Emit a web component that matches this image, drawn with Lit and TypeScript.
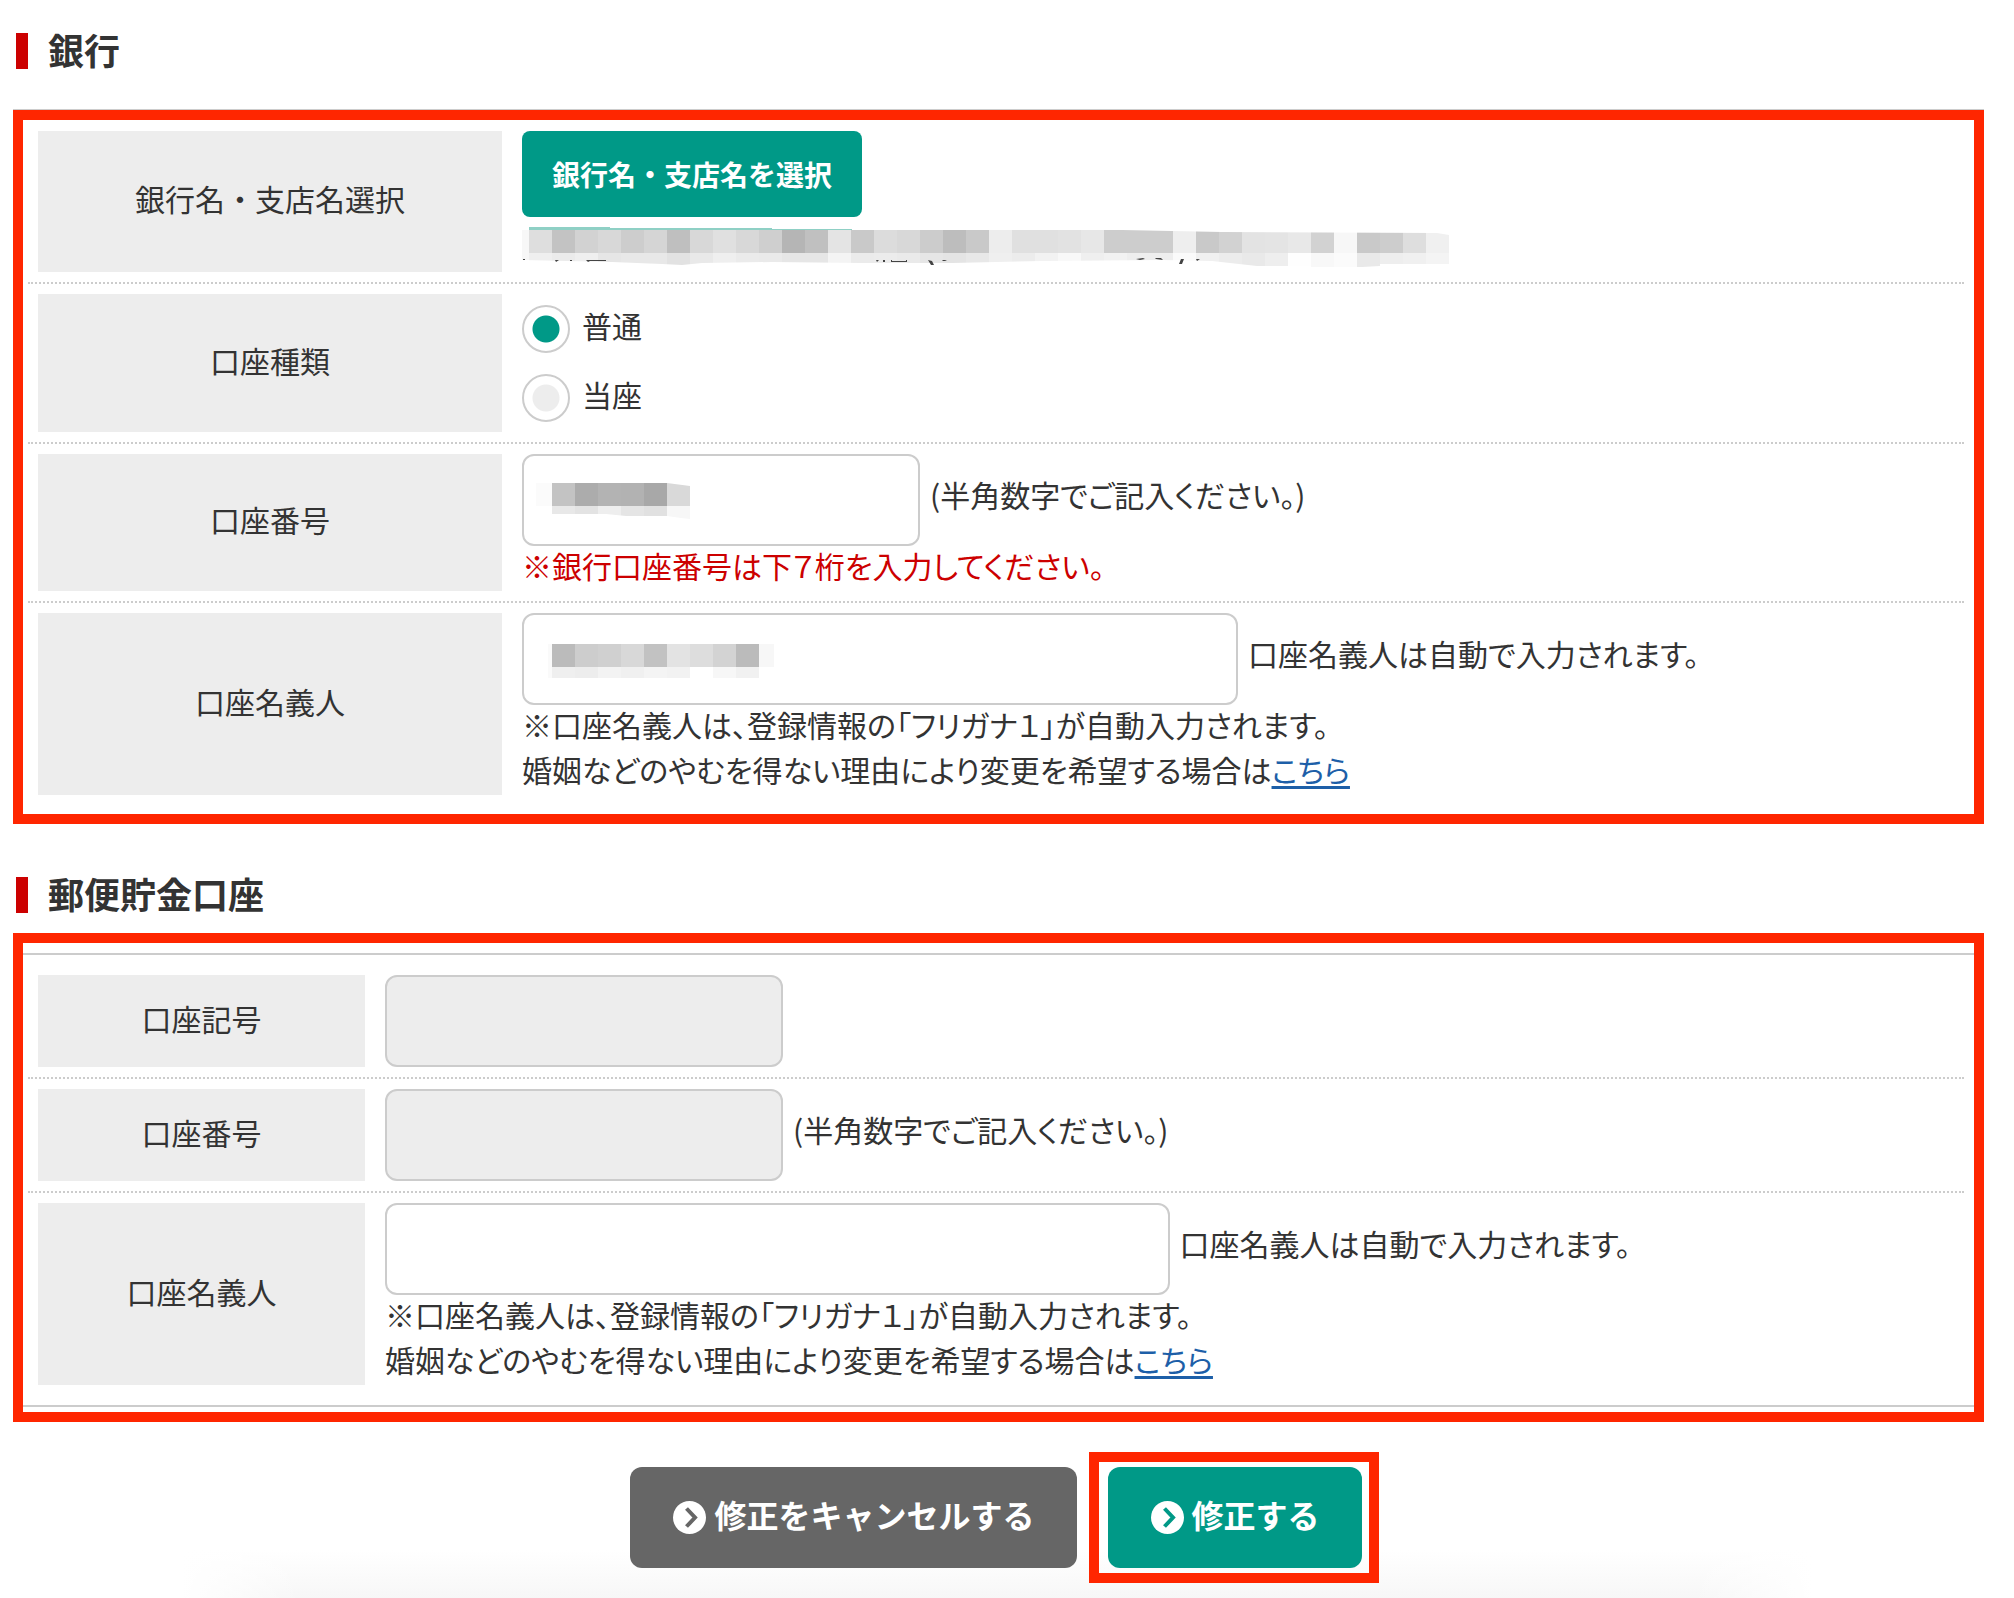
import { LitElement, html, css, svg } from "lit";
import { customElement, property, state } from "lit/decorators.js";

type Tile = [x: number, y: number, width: number, height: number, fill: string];

/** Lays out one strip of mosaic tiles from a list of two-digit grey levels. */
const strip = (x: number, y: number, size: number, height: number, greys: string): Tile[] =>
  greys.split(" ").map((g, i): Tile => [x + i * size, y, size, height, `#${g}${g}${g}`]);

interface Mosaic {
  width: number;
  height: number;
  tiles: Tile[];
  outline: string;
  accent?: string;
  marks?: string;
}

const BRANCH: Mosaic = {
  width: 928,
  height: 45,
  outline:
    "M0 3 H600 L700 5 L915 6 L927 8 V37 H858 V39 L840 40 H789 V39 H735 L690 34 L640 33 L520 34 L430 36 H340 L250 35 L180 36 L160 38 L140 37 L90 35 L0 33 Z",
  tiles: [
    [0, 3, 7, 30, "#f7f7f7"],
    ...strip(7, 3, 23, 23, "de c3 d2 d8 cd d5 bf d8 e0 d8 cf b5 c0 e4 c9 dc d8 cc bd c9 ed e0 e0 e2 e7 cd cd cd ee c9 d2 e3 e4 e8 d2 f7 c9 cd de f0"),
    ...strip(7, 26, 23, 14, "ef eb ef e6 e8 e8 e2 e9 ef eb ea e6 e6 f4 eb ec ea e6 e4 e8 ef ec f2 f8 ef f2 ee ee fa f0 ec e9 ee fe f8 fb e9 ee f0 f4"),
  ],
  accent: "M7 0 L330 2 V3 H7 Z",
  marks:
    "M1 32h2v1h-2z M33 33l4 0 -3 2z M48 33h2v1h-2z M64 33l4 0 16 0v1l-16 0-2 1z M354 33l3 0-2 2z M361 33h2v2h-2z M369 33h1v1h14v-1h1v2h-16z M406 33l4 1 2 4-3 0z M421 33l4 0-2 1h-3z M614 32l7-1 2 1-5 1z M633 31l6 0 2 2-7-1z M659 32h3l-2 5-3 0z M674 32l4 0-3 2z",
};

const NUMBER: Mosaic = {
  width: 154,
  height: 38,
  outline: "M0 0 H131 L154 3 V36 L145 35 L131 33 H90 L70 31 L0 31 Z",
  tiles: [[0, 0, 16, 23, "#fbfbfb"], ...strip(16, 0, 23, 23, "c3 ac b3 b2 a8 d9"), ...strip(16, 23, 23, 13, "e8 e3 ee e5 e1 f7")],
};

const HOLDER: Mosaic = {
  width: 230,
  height: 36,
  outline: "M0 0 H230 V23 H215 V34 H0 Z",
  tiles: [
    [4, 0, 4, 34, "#fafafa"],
    ...strip(8, 0, 23, 23, "bb cd d0 d8 c2 e3 dd d3 bb f7"),
    ...strip(8, 23, 23, 11, "ef ed f3 f0 f4 f2 ff f7 f1"),
  ],
};

@customElement("mosaic-strip")
export class MosaicStrip extends LitElement {
  @property({ attribute: false }) mosaic: Mosaic = NUMBER;

  static styles = css`
    :host {
      display: block;
    }
    .art {
      display: block;
    }
  `;

  render() {
    const m = this.mosaic;
    return html`<svg class="art" width=${m.width} height=${m.height} viewBox="0 0 ${m.width} ${m.height}" aria-hidden="true" shape-rendering="crispEdges">
      <clipPath id="edge"><path d=${m.outline}></path></clipPath>
      <g clip-path="url(#edge)">
        ${m.tiles.map(([x, y, w, h, fill]) => svg`<rect x=${x} y=${y} width=${w} height=${h} fill=${fill}></rect>`)}
      </g>
      ${m.accent ? svg`<path d=${m.accent} fill="#8fd0c5"></path>` : null}
      ${m.marks ? svg`<path d=${m.marks} fill="#444" shape-rendering="auto"></path>` : null}
    </svg>`;
  }
}

@customElement("app-root")
export class AppRoot extends LitElement {
  @state() private kind = "普通";

  static styles = css`
    :host {
      display: block;
      color: #333;
      font-family: "Noto Sans CJK JP", sans-serif;
      font-size: 30px;
      line-height: 45px;
    }
    * {
      box-sizing: border-box;
    }
    .page {
      display: flow-root;
      min-height: 100vh;
      padding: 24px 30px 0 13px;
      background:
        linear-gradient(to right, #fff 9%, transparent 15% 84%, #fff 90%),
        linear-gradient(to top, #f7f7f7, #fff 48px);
    }
    .heading {
      display: flex;
      align-items: center;
      gap: 20px;
      margin: 0 0 32px 3px;
      font-size: 36px;
      line-height: 54px;
    }
    .heading::before {
      content: "";
      width: 12px;
      height: 36px;
      background: #c00;
    }
    .heading.close {
      margin-top: 44px;
      margin-bottom: 11px;
    }
    .title {
      padding-bottom: 4px;
      line-height: 50px;
    }
    .frame {
      border: 10px solid #ff2600;
    }
    .bank {
      padding: 1px 10px 9px 5px;
      box-shadow: 0 -1px #ccc;
    }
    .ruled {
      margin: 10px 0 5px;
      padding: 10px 10px 10px 5px;
      border: solid #ccc;
      border-width: 2px 0;
    }
    .row {
      display: grid;
      grid-template-columns: calc(25% - 15px) 1fr;
      gap: 20px;
      padding: 10px;
      border-bottom: 2px dotted #ccc;
    }
    .ruled .row {
      grid-template-columns: 327px 1fr;
    }
    .row:last-child {
      border-bottom: 0;
    }
    .name {
      display: flex;
      align-items: center;
      justify-content: center;
      padding-bottom: 6px;
      background: #ededed;
    }
    .value {
      font-feature-settings: "palt";
    }
    .line {
      display: flex;
      align-items: center;
      gap: 10px;
    }
    .field {
      position: relative;
      width: 398px;
    }
    .field.wide {
      width: 50%;
    }
    .input {
      display: block;
      width: 100%;
      height: 92px;
      padding: 0 28px;
      border: 2px solid #ccc;
      border-radius: 12px;
      background: #fff;
      color: inherit;
      font: inherit;
    }
    .input:disabled {
      background: #ededed;
    }
    .cover {
      position: absolute;
      left: 14px;
      top: 29px;
    }
    .wide .cover {
      left: 22px;
      top: 31px;
    }
    .aside {
      padding-bottom: 12px;
    }
    .notes {
      margin: -3px 0 3px;
    }
    .note {
      margin: 0;
    }
    .alert {
      color: #c00;
    }
    .link {
      color: #1d5fa8;
      text-decoration-thickness: 3px;
      text-underline-offset: 4px;
    }
    .button {
      display: flex;
      align-items: center;
      gap: 8px;
      border: 0;
      border-radius: 12px;
      background: #009987;
      color: #fff;
      font: inherit;
      font-weight: 700;
      font-feature-settings: normal;
      cursor: pointer;
    }
    .pick {
      height: 86px;
      margin-bottom: 10px;
      padding: 0 30px;
      border-radius: 8px;
      font-size: 28px;
    }
    .branch {
      height: 45px;
    }
    .choices {
      margin: 0;
      padding: 0;
      border: 0;
    }
    .choice {
      display: flex;
      align-items: center;
      gap: 12px;
      height: 69px;
    }
    .radio {
      appearance: none;
      width: 48px;
      height: 48px;
      margin: 0;
      border: 2px solid #ccc;
      border-radius: 50%;
      background: radial-gradient(circle, #ededed 13px, #fff 14px);
    }
    .radio:checked {
      background: radial-gradient(circle, #009987 13px, #fff 14px);
    }
    .actions {
      display: flex;
      align-items: center;
      justify-content: center;
      gap: 12px;
      margin-top: 30px;
      padding-left: 12px;
    }
    .action {
      height: 101px;
      padding: 0 42px 0 43px;
      font-size: 32px;
    }
    .cancel {
      background: #666;
    }
    .marked {
      padding: 5px 7px 5px 9px;
    }
    .icon {
      flex: none;
      width: 33px;
      height: 33px;
    }
    .caption {
      padding-bottom: 6px;
    }
  `;

  private icon(hole: string) {
    return html`<svg class="icon" viewBox="0 0 33 33" aria-hidden="true">
      <circle cx="16.5" cy="16.5" r="16.5" fill="#fff"></circle>
      <path d="M13.5 7.5 L22 16.5 L13.5 25.5" fill="none" stroke=${hole} stroke-width="4"></path>
    </svg>`;
  }

  private holderNotes() {
    return html`<div class="notes">
      <p class="note">※口座名義人は、登録情報の「フリガナ１」が自動入力されます。</p>
      <p class="note">婚姻などのやむを得ない理由により変更を希望する場合は<a class="link" href="#contact">こちら</a></p>
    </div>`;
  }

  private choice(value: string) {
    return html`<label class="choice">
      <input class="radio" type="radio" name="kind" .value=${value} .checked=${this.kind === value} @change=${() => (this.kind = value)} />
      <span class="caption">${value}</span>
    </label>`;
  }

  render() {
    return html`<main class="page">
      <h2 class="heading"><span class="title">銀行</span></h2>
      <section class="frame bank">
        <div class="row">
          <div class="name">銀行名・支店名選択</div>
          <div class="value">
            <button class="button pick" type="button">銀行名・支店名を選択</button>
            <mosaic-strip class="branch" .mosaic=${BRANCH}></mosaic-strip>
          </div>
        </div>
        <div class="row">
          <div class="name" id="kind-name">口座種類</div>
          <fieldset class="value choices" aria-labelledby="kind-name">${this.choice("普通")}${this.choice("当座")}</fieldset>
        </div>
        <div class="row">
          <label class="name" for="bank-number">口座番号</label>
          <div class="value">
            <div class="line">
              <div class="field">
                <input class="input" id="bank-number" type="text" inputmode="numeric" />
                <mosaic-strip class="cover" .mosaic=${NUMBER}></mosaic-strip>
              </div>
              <span class="aside">(半角数字でご記入ください。)</span>
            </div>
            <div class="notes"><p class="note alert">※銀行口座番号は下７桁を入力してください。</p></div>
          </div>
        </div>
        <div class="row">
          <label class="name" for="bank-holder">口座名義人</label>
          <div class="value">
            <div class="line">
              <div class="field wide">
                <input class="input" id="bank-holder" type="text" />
                <mosaic-strip class="cover" .mosaic=${HOLDER}></mosaic-strip>
              </div>
              <span class="aside">口座名義人は自動で入力されます。</span>
            </div>
            ${this.holderNotes()}
          </div>
        </div>
      </section>

      <h2 class="heading close"><span class="title">郵便貯金口座</span></h2>
      <section class="frame">
        <div class="ruled">
          <div class="row">
            <label class="name" for="post-code">口座記号</label>
            <div class="value line">
              <div class="field"><input class="input" id="post-code" type="text" disabled /></div>
            </div>
          </div>
          <div class="row">
            <label class="name" for="post-number">口座番号</label>
            <div class="value line">
              <div class="field"><input class="input" id="post-number" type="text" disabled /></div>
              <span class="aside">(半角数字でご記入ください。)</span>
            </div>
          </div>
          <div class="row">
            <label class="name" for="post-holder">口座名義人</label>
            <div class="value">
              <div class="line">
                <div class="field wide"><input class="input" id="post-holder" type="text" /></div>
                <span class="aside">口座名義人は自動で入力されます。</span>
              </div>
              ${this.holderNotes()}
            </div>
          </div>
        </div>
      </section>

      <div class="actions">
        <button class="button action cancel" type="button">${this.icon("#666")}<span class="caption">修正をキャンセルする</span></button>
        <div class="frame marked">
          <button class="button action" type="submit">${this.icon("#009987")}<span class="caption">修正する</span></button>
        </div>
      </div>
    </main>`;
  }
}
